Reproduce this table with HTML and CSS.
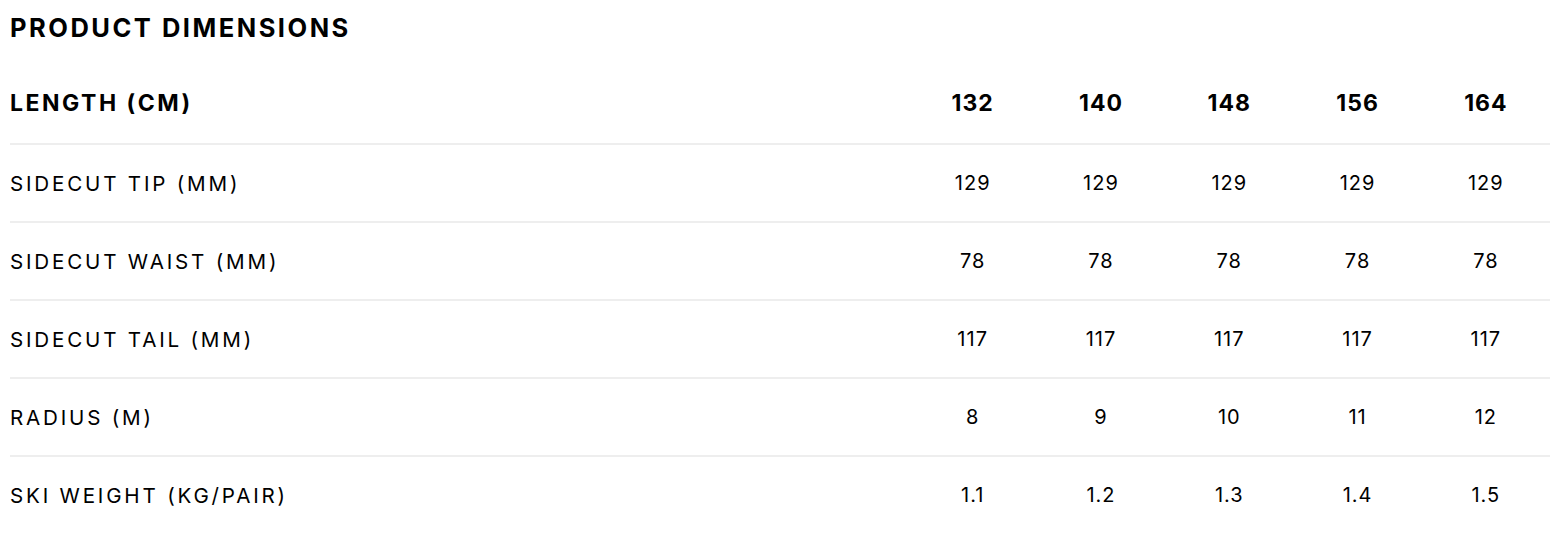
FILE: index.html
```html
<!DOCTYPE html>
<html lang="en">
<head>
<meta charset="utf-8">
<title>Product Dimensions</title>
<link rel="stylesheet" href="styles.css">
</head>
<body>
<section class="dims">
  <h2 class="dims-title">PRODUCT DIMENSIONS</h2>
  <table class="dims-table">
    <thead>
      <tr>
        <th class="label">LENGTH (CM)</th>
        <th>132</th><th>140</th><th>148</th><th>156</th><th>164</th>
      </tr>
    </thead>
    <tbody>
      <tr><td class="label">SIDECUT TIP (MM)</td><td>129</td><td>129</td><td>129</td><td>129</td><td>129</td></tr>
      <tr><td class="label">SIDECUT WAIST (MM)</td><td>78</td><td>78</td><td>78</td><td>78</td><td>78</td></tr>
      <tr><td class="label">SIDECUT TAIL (MM)</td><td>117</td><td>117</td><td>117</td><td>117</td><td>117</td></tr>
      <tr><td class="label">RADIUS (M)</td><td>8</td><td>9</td><td>10</td><td>11</td><td>12</td></tr>
      <tr><td class="label">SKI WEIGHT (KG/PAIR)</td><td>1.1</td><td>1.2</td><td>1.3</td><td>1.4</td><td>1.5</td></tr>
    </tbody>
  </table>
</section>
</body>
</html>
```

FILE: styles.css
```css
html, body {
  margin: 0;
  padding: 0;
  background: #ffffff;
}

body {
  font-family: "Inter", "Noto Sans", sans-serif;
  color: #000000;
}

.dims {
  padding: 10px 2px 0 10px;
}

.dims-title {
  margin: 0;
  font-size: 25.5px;
  font-weight: 700;
  line-height: 36px;
  letter-spacing: 2.5px;
}

.dims-table {
  width: 100%;
  border-collapse: collapse;
  margin-top: 21px;
}

.dims-table th,
.dims-table td {
  height: 76px;
  padding: 0;
  text-align: center;
  width: 128.3px;
  vertical-align: middle;
}

.dims-table th {
  font-size: 23px;
  font-weight: 700;
  letter-spacing: 1px;
  padding-bottom: 4px;
  height: 72px;
}

.dims-table td {
  font-size: 20px;
  font-weight: 400;
  letter-spacing: 1px;
}

.dims-table .label {
  width: auto;
  text-align: left;
}

.dims-table th.label {
  letter-spacing: 2.5px;
}

.dims-table td.label {
  font-size: 20.6px;
  letter-spacing: 2.8px;
}

.dims-table tr {
  border-bottom: 2px solid #eeeeee;
}

.dims-table tbody tr:last-child {
  border-bottom: none;
}
```
